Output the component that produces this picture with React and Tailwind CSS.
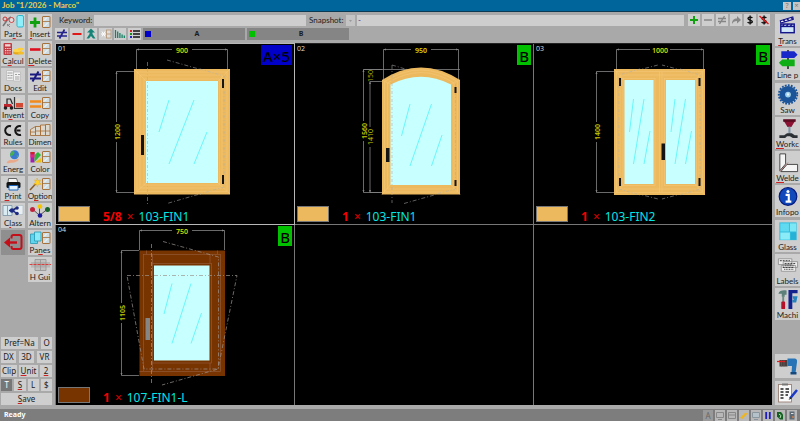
import { useState } from "react";

// the small casement drawn next to the action sign on the edit buttons
const Sash = ({ x = 14 }) => (
    <g transform={`translate(${x} 2)`}>
        <rect x="0.5" y="0.5" width="7.5" height="11" rx="0.5" fill="#cfdde2" stroke="#a5713c" strokeWidth="1" />
        <path d="M0.5 5.5H8" stroke="#a5713c" strokeWidth="0.8" />
        <path d="M2 4.5L5 1.5M2 10.5L6 6.5" stroke="#fff" strokeWidth="0.8" />
    </g>
)

const icons = {
    parts: <>
        <path d="M2 12L7 5L10 3" stroke="#777" strokeWidth="1.6" fill="none" />
        <circle cx="4" cy="5" r="2" fill="none" stroke="#c33" strokeWidth="1" />
        <circle cx="10.5" cy="6" r="2.5" fill="#ddd" stroke="#c44" strokeWidth="1" />
        <path d="M6 10l3 3M9 10l-3 2" stroke="#888" />
        <rect x="16" y="1.5" width="6.5" height="11.5" rx="1.5" fill="#8ff0fb" stroke="#2bb9cf" />
    </>,
    insert: <><path d="M2 8.5H12M7 3.5V13.5" stroke="#10a010" strokeWidth="2.8" /><Sash /></>,
    calcul: <>
        <rect x="2.5" y="2" width="8.5" height="12" rx="1" fill="#c23a42" />
        <rect x="4" y="3.2" width="5.5" height="2.3" fill="#f0d5d5" />
        <path d="M4 7.5H10M4 9.7H10M4 12H10" stroke="#f6dcdc" strokeWidth="1.2" strokeDasharray="1.3 0.9" />
        <ellipse cx="16" cy="11.5" rx="4" ry="2" fill="#e7a91c" />
        <ellipse cx="16" cy="9.5" rx="4" ry="1.8" fill="#ffd54a" />
        <ellipse cx="20" cy="12" rx="3" ry="1.6" fill="#f4bd2c" />
        <ellipse cx="19.5" cy="8" rx="3" ry="1.3" fill="#ffcf3a" />
    </>,
    delete: <><path d="M2 8.5H12.5" stroke="#dd1020" strokeWidth="2.6" /><Sash /></>,
    docs: <>
        <path d="M5.5 2.5h7v10h-7z" fill="#eee" stroke="#bbb" strokeWidth="0.8" />
        <path d="M12.5 4h7v9h-7z" fill="#f2f2f2" stroke="#bbb" strokeWidth="0.8" />
        <path d="M6.5 5h5M6.5 7.5h2M9.5 7.5h2M6.5 10h5M14 6.5h2M17 6.5h2M14 9h4.5M14 11h4.5" stroke="#999" strokeWidth="0.9" />
    </>,
    edit: <><path d="M2 6.5H13M2 10.5H13M10.5 3.5L4.5 13.5" stroke="#1a1a80" strokeWidth="2" /><Sash /></>,
    invent: <>
        <path d="M3 9h7l2 3H3z" fill="#c0242c" />
        <path d="M6 9V4h3.5l2 5" fill="none" stroke="#222" strokeWidth="1.2" />
        <path d="M13.5 2V13.5H22" fill="none" stroke="#333" strokeWidth="1.2" />
        <rect x="15" y="8" width="7" height="4.5" fill="#d34a34" />
        <rect x="15" y="3.5" width="4" height="4" fill="#ded6c8" />
        <circle cx="4.5" cy="13" r="1.8" fill="#222" /><circle cx="10.5" cy="13" r="1.8" fill="#222" />
    </>,
    copy: <><path d="M2 6.5H13M2 11.5H13" stroke="#f08a1c" strokeWidth="2.6" /><Sash /></>,
    rules: <>
        <path d="M10 4.2A4.5 4.5 0 1 0 10 12.8M20 4.2A4.5 4.5 0 1 0 20 12.8M15.5 8.5H19.5" fill="none" stroke="#151515" strokeWidth="2" />
    </>,
    dimen: <>
        <path d="M2.5 13.5V7.5L7.5 4.5V13.5zM7.5 13.5V4.5H12.5V13.5zM12.5 13.5V3H17.5V13.5zM17.5 13.5V2.5H22V13.5z" fill="#ddd8ce" stroke="#a5713c" strokeWidth="0.9" />
        <path d="M2.5 10H7.5M7.5 9H22" stroke="#a5713c" strokeWidth="0.8" />
    </>,
    energ: <>
        <circle cx="13.5" cy="5.8" r="4.5" fill="#3978d2" />
        <path d="M11 2.5c3-1 3 2 1.5 3s-2 3-3 1.5 0-3.5 1.5-4.5M15.5 6c2 0 2 2 0.5 3z" fill="#4cb04a" />
        <path d="M5.5 13.5c2-3 5-2.5 7-2.2l5-1.5c1 0.7-1 2.5-3.5 3.5-3 1-5 0.2-7 1.2z" fill="#e9a98b" />
    </>,
    color: <>
        <path d="M2.5 3h4v10.5h-4z" fill="#a31fb2" /><path d="M2.5 3h4v2.5h-4z" fill="#d32020" />
        <path d="M6.5 6L10 3l3 3-6.5 7z" fill="#2fb53a" /><path d="M6.5 13.5L13 9v4.5z" fill="#e7c11e" />
        <path d="M2.5 5.5h4v3h-4z" fill="#e7267b" /><Sash />
    </>,
    print: <>
        <path d="M7.5 2.5h8l1.5 4H7z" fill="#f3f3f3" stroke="#444" strokeWidth="0.8" />
        <rect x="5.5" y="6" width="14" height="6" rx="1.5" fill="#111" />
        <path d="M8 9.5h9v4.5H8z" fill="#e2f1ff" stroke="#1a65bb" strokeWidth="1" />
    </>,
    option: <>
        <path d="M2 14L8 7.5" stroke="#875b28" strokeWidth="1.5" />
        <path d="M9 2l1 2.5 2.5-.5-1.2 2.3 1.7 2-2.6-.1-1 2.6-1-2.6-2.8 0 2-2-1-2.3 2.3.7z" fill="#ffd22b" stroke="#e0a000" strokeWidth="0.4" /><Sash />
    </>,
    class: <>
        <path d="M2 2.5h9v10H2zM6.5 2.5v10" fill="#d9ecf3" stroke="#829bad" strokeWidth="0.9" />
        <path d="M14 2.5h8v9h-8z" fill="#e9eef1" stroke="#b1bbc3" strokeWidth="0.7" />
        <path d="M8 7.5H12L16 4.5M12 7.5L16 11" stroke="#1d2b83" strokeWidth="1.3" />
        <circle cx="11" cy="7.5" r="2.2" fill="#1d2b83" /><circle cx="16" cy="5" r="1.8" fill="#1d2b83" /><circle cx="16" cy="10.5" r="1.8" fill="#1d2b83" />
    </>,
    altern: <>
        <path d="M4.5 6L11.5 12.5L19.5 6M11.5 4V12" fill="none" stroke="#444" strokeWidth="0.9" />
        <circle cx="4.5" cy="6.5" r="2.5" fill="#c0243c" /><circle cx="12" cy="3.5" r="2.3" fill="#f4c500" />
        <circle cx="19.5" cy="6.5" r="2.5" fill="#17652a" /><circle cx="12" cy="12.5" r="2.3" fill="#1b1b9a" />
    </>,
    panes: <>
        <path d="M2.5 4h7v9.5h-7z" fill="#5fd4ec" stroke="#2498b5" strokeWidth="0.8" />
        <path d="M6.5 2h6.5v9H6.5z" fill="#8ae8f7" stroke="#2498b5" strokeWidth="0.8" /><Sash />
    </>,
    hgui: <>
        <path d="M7 2.5h11v11H7zM12.5 2.5v11" fill="#c2bfbf" stroke="#999" strokeWidth="0.9" />
        <rect x="3" y="5" width="19" height="5.5" fill="#9b9393" opacity="0.4" />
        <path d="M1.5 7.5H23" stroke="#e03030" strokeWidth="0.9" strokeDasharray="3 1" />
    </>,
    exit: <>
        <path d="M10.5 7.5V6a2 2 0 0 1 2-2H18.5a2 2 0 0 1 2 2v10a2 2 0 0 1-2 2H12.500a2 2 0 0 1-2-2v-1" fill="none" stroke="#c40f1a" strokeWidth="2" />
        <path d="M9 6.5V16.5L3 11.5z" fill="#c40f1a" /><path d="M7 11.5H16" stroke="#c40f1a" strokeWidth="2.4" />
    </>,
    trans: <>
        <rect x="4.5" y="10.5" width="14" height="9" fill="#cfe5f8" stroke="#15158a" strokeWidth="1.5" />
        <path d="M4.5 13H18.5" stroke="#15158a" strokeWidth="1.5" />
        <path d="M4 7L17 3L17.5 5.5L4.5 9.5z" fill="#fff" stroke="#15158a" strokeWidth="1.2" />
        <path d="M7 6l2 2.2M11 5l2 2M15 3.5l2 2M8 10.5l-1.5 2.5M12 10.5l-1.5 2.5M16 10.5l-1.5 2.5" stroke="#15158a" strokeWidth="1.5" />
    </>,
    line: <>
        <path d="M12 2V22" stroke="#222" strokeWidth="1.6" />
        <path d="M5 3.5H18.5L22 7L18.5 10.5H5z" fill="#1929c9" />
        <path d="M19 12H6L2.5 15.5L6 19H19z" fill="#0fae16" />
    </>,
    saw: <>
        <circle cx="12" cy="12" r="9" fill="#1b5499" />
        <circle cx="12" cy="12" r="9.6" fill="none" stroke="#1b5499" strokeWidth="2" strokeDasharray="1.9 1.3" />
        <circle cx="12" cy="12" r="3" fill="#9fd0ea" /><circle cx="12" cy="12" r="1.2" fill="#e7f7ff" />
    </>,
    workc: <>
        <path d="M7 2.5H20L18.5 5.5L15.5 10.5H11.5L8.5 5.5z" fill="#8b1232" /><path d="M7 2.5H20V5H7z" fill="#590d22" />
        <path d="M13.5 10V18" stroke="#8296a5" strokeWidth="2.2" />
        <path d="M3 22V19H8L11 17H16L19 19H22V22H17L14 20H11L9 22z" fill="#2b3035" />
    </>,
    welde: <>
        <path d="M3.5 3H9.5V13.5L3.5 20.5z" fill="#f5f5f5" stroke="#333" strokeWidth="0.9" />
        <path d="M4.5 21.5L11 14H22V21.5z" fill="#f5f5f5" stroke="#333" strokeWidth="0.9" />
        <path d="M3.5 21.5L12 12" stroke="#a96b6b" strokeWidth="0.8" />
    </>,
    info: <>
        <circle cx="12" cy="12" r="9.2" fill="#1148ba" stroke="#071a7d" strokeWidth="1.2" />
        <circle cx="12" cy="6.7" r="1.6" fill="#fff" />
        <path d="M9.5 10.3H12.8V17M9.500 17.300H15.500" fill="none" stroke="#fff" strokeWidth="2.2" />
    </>,
    glass: <>
        <rect x="3" y="2.5" width="18" height="18.5" fill="#31bcdc" />
        <path d="M4 3.5h9v8.5H4z" fill="#60daf0" /><path d="M14 3.5h6.5v8.5H14z" fill="#7de8f5" />
        <path d="M4 13h10v7.5H4z" fill="#8bebf7" /><path d="M15 13h5.5v7.5H15z" fill="#28b1d6" />
    </>,
    labels: <>
        <path d="M2 5h14v6H2zM7 8h15v6H7zM5 12h15v6H5z" fill="#eee" stroke="#888" strokeWidth="0.8" />
        <path d="M3.5 7H14M8.5 10H20M6.5 14H18" stroke="#333" strokeWidth="1" strokeDasharray="2 1" />
        <path d="M9 12h9M8 16H18" stroke="#666" strokeWidth="1.4" strokeDasharray="1 0.7" />
    </>,
    machi: <>
        <path d="M2 6C3 2.5 6 2 10.5 2.5V7H8.5V9H5.5V6z" fill="#5b8079" />
        <path d="M7 8V15" stroke="#6d8b85" strokeWidth="2" /><rect x="5" y="14" width="4" height="8" rx="1" fill="#b5122a" />
        <path d="M12.5 2H22V5.5H16.5V22H12.5z" fill="#13228d" />
        <path d="M16.5 8.5H22L20.5 15H16.5V12.5H18z" fill="#2784bd" />
    </>,
    drill: <>
        <path d="M4.500 6h8v6.5h-8z" fill="#47413f" /><path d="M6.5 6v6.5M9 6v6.5" stroke="#6b5550" strokeWidth="0.8" />
        <path d="M2 7.5H10" stroke="#dd2020" strokeWidth="1.3" />
        <path d="M12.5 4.5H20Q22.5 5 22 8L20.5 19H16.5L17 12H12.5z" fill="#2674b5" /><path d="M15.5 18h6v2.5h-6z" fill="#164a7d" />
    </>,
    check: <>
        <rect x="3.5" y="3.5" width="13" height="17.5" fill="#fafafa" stroke="#9a8175" strokeWidth="0.9" />
        <path d="M7 2.5h6v2H7z" fill="#777" />
        <path d="M5.5 8H8.5M5.5 11H8.5M5.5 14H8.5M5.5 17H8.5M10.5 8H14M10.5 11H14M10.5 14H13" stroke="#222" strokeWidth="1.4" />
        <path d="M22 9L15 17.5" stroke="#1838c5" strokeWidth="2.5" /><path d="M15.5 16L13.5 19L16.5 17.5z" fill="#222" />
    </>,
}

// caption with its shortcut letter underlined
const Caption = ({ text, hot = -1 }) => (
    <span className="block whitespace-nowrap font-[Lato,sans-serif] text-[8px] leading-[8px]">
        {hot < 0 ? text : <>{text.slice(0, hot)}<span className="underline decoration-[#d02020]">{text[hot]}</span>{text.slice(hot + 1)}</>}
    </span>
)

const leftTools = [
    ["parts", "Parts", 2], ["insert", "Insert", 0],
    ["calcul", "Calcul", 1], ["delete", "Delete", 0],
    ["docs", "Docs"], ["edit", "Edit"],
    ["invent", "Invent", 2], ["copy", "Copy"],
    ["rules", "Rules"], ["dimen", "Dimen"],
    ["energ", "Energ"], ["color", "Color"],
    ["print", "Print", 0], ["option", "Option", 1],
    ["class", "Class", 1], ["altern", "Altern"],
    ["exit", ""], ["panes", "Panes", 2],
    null, ["hgui", "H Gui"],
]

const rightTools = [
    ["trans", "Trans", 0], ["line", "Line p"], ["saw", "Saw"], ["workc", "Workc", 0], ["welde", "Welde", 0],
    ["info", "Infopo"], ["glass", "Glass"], ["labels", "Labels"], ["machi", "Machi"],
]

const LeftTool = ({ icon, text, hot }) => {
    if (!text) {
        return (
            <button aria-label="Exit" className="h-[25px] bg-[#8f8f8f]">
                <svg viewBox="0 0 24 24" className="h-6 w-6">{icons[icon]}</svg>
            </button>
        )
    }
    return (
        <button className="flex h-[25px] flex-col items-center overflow-hidden bg-[#cecece]">
            <svg viewBox="0 0 24 16" className="h-4 w-6 shrink-0">{icons[icon]}</svg>
            <Caption text={text} hot={hot} />
        </button>
    )
}

const Key = ({ text, hot, className = "flex-1" }) => (
    <button className={`h-3 bg-[#cecece] text-[8px] leading-[12px] ${className}`}>
        {hot ? <span className="underline decoration-[#d02020]">{text[0]}</span> : text[0]}{text.slice(1)}
    </button>
)

const LeftBar = () => (
    <aside className="flex w-[51px] shrink-0 flex-col justify-between">
        <div className="grid grid-cols-2 gap-x-[3px] gap-y-[2px]">
            {leftTools.map((tool, i) => tool
                ? <LeftTool key={tool[0]} icon={tool[0]} text={tool[1]} hot={tool[2]} />
                : <span key={i} />
            )}
        </div>
        <div className="flex flex-col gap-[2px]">
            <div className="flex gap-[3px]"><Key text="Pref=Na" /><Key text="O" className="w-[11px]" /></div>
            <div className="flex gap-[3px]"><Key text="DX" /><Key text="3D" /><Key text="VR" /></div>
            <div className="flex gap-[2px]"><Key text="Clip" className="w-4" /><Key text="Unit" hot className="w-[19px]" /><Key text="2" hot className="w-3" /></div>
            <div className="flex gap-[2px]">
                <Key text="T" className="flex-1 bg-[#777777]! text-white" /><Key text="S" hot /><Key text="L" /><Key text="$" />
            </div>
            <Key text="Save" hot className="w-full" />
        </div>
    </aside>
)

const RightBar = () => (
    <aside className="flex w-[25px] shrink-0 flex-col overflow-hidden">
        <div className="flex flex-1 flex-col justify-between">
            {rightTools.map(([icon, text, hot]) =>
                <button key={icon} className="flex h-8 flex-col items-center overflow-hidden bg-[#cecece]">
                    <svg viewBox="0 0 24 24" className="h-[23px] w-6 shrink-0">{icons[icon]}</svg>
                    <Caption text={text} hot={hot} />
                </button>
            )}
        </div>
        <div className="mt-[34px] flex flex-col gap-[3px]">
            <button aria-label="Drilling" className="h-6 bg-[#cecece]"><svg viewBox="0 0 24 24" className="h-6 w-6">{icons.drill}</svg></button>
            <button aria-label="Checklist" className="h-6 bg-[#cecece]"><svg viewBox="0 0 24 24" className="h-6 w-6">{icons.check}</svg></button>
        </div>
    </aside>
)

const MiniButton = ({ label, children, className = "w-3" }) => (
    <button aria-label={label} className={`h-3 shrink-0 bg-[#cecece] ${className}`}>
        <svg viewBox="0 0 12 12" className="mx-auto h-3 w-3">{children}</svg>
    </button>
)

const Dollar = () => (
    <path d="M8.3 4C7.8 2.9 4 2.6 4 4.5S8.3 5.7 8.3 7.6 4.2 9.3 3.7 8M6.1 1.5V10.5" fill="none" stroke="#111" strokeWidth="1.4" />
)

const SearchRow = () => {
    const [keyword, setKeyword] = useState("")
    const [snapshot, setSnapshot] = useState("-")
    return (
        <div className="flex h-3 items-center font-[Lato,sans-serif] text-[8px]">
            <label htmlFor="keyword" className="w-[39px] pl-1">Keyword:</label>
            <input id="keyword" value={keyword} onChange={(e) => setKeyword(e.target.value)} className="h-[11px] w-[212px] bg-[#cecece] px-1 outline-none" />
            <label htmlFor="snapshot" className="w-10 pl-[3px]">Snapshot:</label>
            <button aria-label="Pick snapshot" className="mr-[2px] h-[11px] w-[9px] bg-[#c4c4c4]">
                <svg viewBox="0 0 9 11" className="h-[11px] w-[9px]"><path d="M3 5h3l-1.5 2z" fill="#999" /></svg>
            </button>
            <input id="snapshot" value={snapshot} onChange={(e) => setSnapshot(e.target.value)} className="h-[11px] min-w-0 flex-1 bg-[#cecece] px-[1px] text-[#2a3f8f] outline-none" />
            <div className="ml-1 mr-[2px] flex gap-[2px]">
                <MiniButton label="Add"><path d="M2 6H10M6 2V10" stroke="#10a010" strokeWidth="2" /></MiniButton>
                <MiniButton label="Remove"><path d="M2 6H10" stroke="#8b8b8b" strokeWidth="1.6" /></MiniButton>
                <MiniButton label="Modify"><path d="M2 4.5H10M2 7.5H10M8.5 2L3.5 10" stroke="#858585" strokeWidth="1.4" /></MiniButton>
                <MiniButton label="Forward"><path d="M2 10C2 6 4 4.5 7 4.5V2L11 6L7 9.5V7C4.5 7 3 8 2 10z" fill="#888" /></MiniButton>
                <MiniButton label="Prices"><Dollar /></MiniButton>
                <MiniButton label="No prices"><Dollar /><path d="M1.5 2L10.5 10" stroke="#e01818" strokeWidth="1.4" /></MiniButton>
            </div>
        </div>
    )
}

const TabRow = () => (
    <div className="mt-[2px] flex h-3 gap-[2px] text-[7px] font-bold">
        <MiniButton label="Change" className="w-[13px]"><path d="M1 4.5H11M1 8H11M8.5 1.5L3.5 10.5" stroke="#24248c" strokeWidth="1.7" /></MiniButton>
        <MiniButton label="Take away" className="w-[13px]"><path d="M1.5 6H10.5" stroke="#e01818" strokeWidth="2" /></MiniButton>
        <MiniButton label="Merge">
            <path d="M6 0.5L10 4.5H7.5V6L10.5 10.5H8L6 8L4 10.5H1.5L4.5 6V4.5H2z" fill="#168377" />
        </MiniButton>
        <MiniButton label="Freeze" className="w-[13px]">
            <path d="M1 6H6M2 3.5L5 8.5M5 3.5L2 8.5" stroke="#fff" strokeWidth="1" /><rect x="6.5" y="2" width="4.5" height="8" fill="#ddd" stroke="#b59674" strokeWidth="0.8" /><path d="M6.5 6H11" stroke="#b59674" strokeWidth="0.8" />
        </MiniButton>
        <MiniButton label="Sort"><path d="M1.5 2V10M3.7 3.5V10M5.9 5V10M8.1 6.5V10M10.3 7.5V10" stroke="#178065" strokeWidth="1.3" /></MiniButton>
        <MiniButton label="List" className="w-[13px]">
            <path d="M4 3H11M4 6H11M4 9H11" stroke="#111" strokeWidth="1.5" />
            <path d="M1 3H3" stroke="#d02020" strokeWidth="1.8" /><path d="M1 6H3" stroke="#159015" strokeWidth="1.8" /><path d="M1 9H3" stroke="#2020c0" strokeWidth="1.8" />
        </MiniButton>
        <button className="flex w-[102px] items-center bg-[#858585] px-[2px]">
            <span className="h-[6px] w-[6px] bg-[#0000c8]" /><span className="flex-1">A</span>
        </button>
        <button className="flex w-[102px] items-center bg-[#858585] px-[2px]">
            <span className="h-[6px] w-[6px] bg-[#00c000]" /><span className="flex-1">B</span>
        </button>
    </div>
)

// horizontal dimension: line at y from x1 to x2, witness lines down to "to"
const DimH = ({ x1, x2, y, to, text }) => {
    const mid = (x1 + x2) / 2
    return (
        <g stroke="#858585" strokeWidth="0.8" fill="none">
            <path d={`M${x1} ${y}H${mid - 10}M${mid + 10} ${y}H${x2}M${x1} ${y}V${to}M${x2} ${y}V${to}`} />
            <path d={`M${x1} ${y}l2.5 -1v2zM${x2} ${y}l-2.5 -1v2z`} fill="#858585" stroke="none" />
            <text x={mid} y={y + 3} textAnchor="middle" fontSize="7" fontWeight="600" fill="#dada00" stroke="none">{text}</text>
        </g>
    )
}

const DimV = ({ y1, y2, x, to, text, mid = (y1 + y2) / 2, weight = 600, gap = 10 }) => (
    <g stroke="#858585" strokeWidth="0.8" fill="none">
        <path d={`M${x} ${y1}V${Math.max(mid - gap, y1)}M${x} ${Math.min(mid + gap, y2)}V${y2}M${x} ${y1}H${to}M${x} ${y2}H${to}`} />
        <path d={`M${x} ${y1}l-1 2.5h2zM${x} ${y2}l-1 -2.5h2z`} fill="#858585" stroke="none" />
        <text transform={`translate(${x + 3} ${mid}) rotate(-90)`} textAnchor="middle" fontSize="7" fontWeight={weight} fill="#c8c800" stroke="none">{text}</text>
    </g>
)

const Swing = ({ d, color = "#858585" }) => <path d={d} fill="none" stroke={color} strokeWidth="0.7" strokeDasharray="4 2 1 2" />
const FaintSwing = ({ d }) => <path d={d} fill="none" stroke="#b0b0a8" strokeWidth="0.6" strokeDasharray="3 2 1 2" />
const Shine = ({ d }) => <path d={d} stroke="#5cf6fa" strokeWidth="0.9" fill="none" />
const Fittings = ({ d }) => <path d={d} fill="#151515" />

const Window1 = () => (
    <>
        <DimH x1={136.5} x2={227.5} y={49.5} to={69} text="900" />
        <DimV y1={71.5} y2={192.5} x={116.5} to={134} text="1200" />
        <Swing d="M147.5 62V204M167 60L224 76M224 187L167 203.5" />
        <rect x="134" y="69" width="96" height="125.5" fill="#edb95f" />
        <g fill="none" stroke="#f4c778" strokeWidth="0.6">
            <rect x="137" y="72" width="90" height="119.5" /><rect x="140" y="75" width="82" height="113" /><rect x="144" y="79" width="75.5" height="106" />
            <path d="M134 69L146 81M230 69L218 81M134 194L146 183M230 194L218 183" />
        </g>
        <rect x="146" y="81" width="72" height="102" fill="#c8ffff" />
        <FaintSwing d="M147.5 69V194M200 69L224 76V187L200 194" />
        <Shine d="M169 100L159 132M194 100L169 164M207 132L194 164" />
        <Fittings d="M141 135h3v20h-3zM222 79h2v9h-2zM222 175h2v9h-2z" />
    </>
)

const Window2 = () => (
    <>
        <DimH x1={383.5} x2={458.5} y={49.5} to={80} text="950" />
        <DimV y1={69.5} y2={192.5} x={363.5} to={382} text="1560" />
        <path d="M363.5 69.5H460" stroke="#858585" strokeWidth="0.8" />
        <DimV y1={81.5} y2={192.5} x={370} to={382} text="1410" weight={400} />
        <text transform="translate(373 76) rotate(-90)" textAnchor="middle" fontSize="7" fill="#a8a800">150</text>
        <Swing d="M392 65V203M392 65L412 71M404 203.5L436 194.5" />
        <path d="M382 194.5V80Q421 55 460 80V194.5z" fill="#edb95f" />
        <g fill="none" stroke="#f4c778" strokeWidth="0.6">
            <path d="M384.5 192V81.5Q421 58.5 457.5 81.5V192z" /><path d="M387.5 189V83Q421 62 454 83V189z" />
            <path d="M382 194.5L390 185M460 194.5L451 185M382 80L390 84M460 80L451 84" />
        </g>
        <path d="M390.5 185V84.5Q421 69 451 84.5V185z" fill="#c8ffff" />
        <FaintSwing d="M392 75V194M455.5 84V189L436 194" />
        <Shine d="M410 104L401.5 136M431.5 104L410 166M442 135L431.5 166" />
        <Fittings d="M386 148h3.5v14h-3.5zM454.5 87h2v6h-2zM454.5 180h2v6h-2z" />
    </>
)

const Window3 = () => (
    <>
        <DimH x1={616.5} x2={703.5} y={49.5} to={69} text="1000" />
        <DimV y1={71.5} y2={192.5} x={596.5} to={614} text="1400" />
        <Swing d="M619 75L658 65M700 75L662 65M619 189L658 199M700 189L662 199" />
        <rect x="614" y="69" width="91" height="126" fill="#edb95f" />
        <g fill="none" stroke="#f4c778" strokeWidth="0.6">
            <rect x="616.5" y="71.5" width="86" height="121" /><rect x="620" y="75" width="79" height="114" />
            <rect x="623" y="78.5" width="32" height="107" /><rect x="664.5" y="78.5" width="32" height="107" />
            <path d="M614 69L624 80M705 69L695 80M614 195L624 184M705 195L695 184M659.5 72V192M662 72V192" />
        </g>
        <rect x="624.5" y="80" width="29" height="104" fill="#c8ffff" />
        <rect x="666" y="80" width="29" height="104" fill="#c8ffff" />
        <FaintSwing d="M640 69L619 75V189L640 195M680 69L700 75V189L680 195" />
        <Shine d="M633.5 99L629.5 132M644 99L633.5 164M650 131L644 164M675 99L671 132M685.5 99L675 164M691.5 131L685.5 164" />
        <Fittings d="M661.5 143.5h3.5v16.5h-3.5zM619 78h2v8h-2zM619 178h2v8h-2zM698.5 78h2v8h-2zM698.5 178h2v8h-2z" />
    </>
)

const Window4 = () => (
    <>
        <DimH x1={139.5} x2={224.5} y={230.5} to={250} text="750" />
        <DimV y1={250.5} y2={375.5} x={121.5} to={139} text="1105" />
        <rect x="139.5" y="250.5" width="85.5" height="125.5" fill="#773300" />
        <g fill="none" stroke="#935a37" strokeWidth="0.7">
            <rect x="143.5" y="254.5" width="77" height="117" /><rect x="152.5" y="263.5" width="59" height="99.5" />
            <path d="M152.5 254.5V263M210 254.5V263M152.5 363V371M210 363V371M146.5 250.5V254M217.5 250.5V254M139.5 371.5H143" />
        </g>
        <rect x="154" y="265.5" width="55.5" height="95" fill="#c8ffff" />
        <Swing d="M151.5 244V385M163 241.5L218.5 257V369L162 385M127 275.5H237L218 369H144z" color="#9d958f" />
        <Shine d="M172 283.5L164 314M191 283.5L172 343.5M201.5 313L191 343.5" />
        <rect x="145.5" y="318" width="4.5" height="22" fill="#858585" />
    </>
)

const positions = [
    { no: "01", qty: "5/8", name: "103-FIN1", group: "A×5", badge: "bg-[#0000c8]", swatch: "bg-[#edb95f]", origin: "56 44", drawing: <Window1 />, selected: true },
    { no: "02", qty: "1", name: "103-FIN1", group: "B", badge: "bg-[#00c000]", swatch: "bg-[#edb95f]", origin: "295 44", drawing: <Window2 /> },
    { no: "03", qty: "1", name: "103-FIN2", group: "B", badge: "bg-[#00c000]", swatch: "bg-[#edb95f]", origin: "534 44", drawing: <Window3 /> },
    { no: "04", qty: "1", name: "107-FIN1-L", group: "B", badge: "bg-[#00c000]", swatch: "bg-[#773300]", origin: "56 225", drawing: <Window4 /> },
    null,
    null,
]

const Position = ({ pos }) => (
    <div className={`relative flex flex-col justify-between bg-black ${pos.selected ? "z-10 outline-1 outline-[#b8b8b8]" : ""}`}>
        <svg viewBox={`${pos.origin} 238 180`} className="absolute inset-0 h-full w-full">{pos.drawing}</svg>
        <div className="relative flex items-start justify-between">
            <span className="pl-[2px] text-[7px] leading-[10px] text-[#d8d8d8]">{pos.no}</span>
            <span className={`mr-[2px] mt-px px-[2px] pt-[2px] text-[15px] leading-[18px] font-medium text-black ${pos.badge}`}>{pos.group}</span>
        </div>
        <div className="relative flex items-end pb-[2px] pl-[2px]">
            <span className={`h-4 w-8 border border-[#777] ${pos.swatch}`} />
            <p className="ml-[13px] flex gap-[5px] text-[12px] leading-[11px]">
                <b className="text-[#f40000]">{pos.qty}</b>
                <span className="font-medium text-[#cc0000]">×</span>
                <span className="text-[#00e6e6]">{pos.name}</span>
            </p>
        </div>
    </div>
)

const StatusIcon = ({ label, children }) => (
    <button aria-label={label} className="h-[11px] w-[10px] bg-[#b8b8b8]">
        <svg viewBox="0 0 10 11" className="h-[11px] w-[10px]">{children}</svg>
    </button>
)

const StatusBar = () => (
    <footer className="flex h-3 shrink-0 items-center justify-between bg-[#7d7d7d] pl-1 pr-[3px] text-[7px] font-bold text-white">
        <span>Ready</span>
        <div className="flex gap-[2px]">
            <button aria-label="Text" className="h-[11px] w-[10px] bg-[#999] text-[8px] leading-[11px] font-normal text-[#666]">A</button>
            <StatusIcon label="Screen"><path d="M1.5 2.5h7v5h-7zM3 9.5h4" fill="none" stroke="#888" /></StatusIcon>
            <StatusIcon label="Layout"><path d="M1.5 2.5h7v6h-7zM1.5 5H8.5" fill="none" stroke="#888" /></StatusIcon>
            <StatusIcon label="Write"><path d="M2 8.5L7.5 3" stroke="#f0b51c" strokeWidth="2.4" /></StatusIcon>
            <StatusIcon label="Monitor"><path d="M1.5 2.5h7v5h-7zM3 9.5h4" fill="#b5c2c9" stroke="#8a969d" /></StatusIcon>
            <StatusIcon label="Pause"><path d="M3.2 2V9M6.8 2V9" stroke="#1c1cc0" strokeWidth="1.8" /></StatusIcon>
            <StatusIcon label="Refresh"><path d="M2 2h4l2 2.5v5H5L2 6.5z" fill="#146023" /><path d="M4 4l2 1.5L5 8" fill="none" stroke="#b9e4b9" /></StatusIcon>
            <StatusIcon label="Server"><path d="M2.5 1.5h5v8h-5z" fill="#5c6a75" /><path d="M4 3.5h2.5" stroke="#ddd" /><circle cx="6" cy="7" r="1.2" fill="#b47b53" /></StatusIcon>
        </div>
    </footer>
)

const App = () => {
    return (
        <div className="flex min-h-screen flex-col bg-[#a9a9a9] font-['Noto_Sans',sans-serif] text-[#1c1c1c]">
            <header className="flex h-3 shrink-0 items-center justify-between border-b border-[#0a3a55] bg-[#00659a] pl-[2px]">
                <h1 className="font-[Lato,sans-serif] text-[8px] leading-[11px] font-bold text-[#f0cf4a]">Job "1/2026 - Marco"</h1>
                <div className="flex gap-[2px] text-[7px] leading-[8px] text-[#777]">
                    <button className="h-2 w-2 bg-[#c4c4c4]">?</button>
                    <button className="h-2 w-[7px] bg-[#c4c4c4]">×</button>
                </div>
            </header>
            <div className="flex flex-1 gap-[3px] pt-[2px] pb-1 pl-px">
                <LeftBar />
                <main className="flex min-w-0 flex-1 flex-col">
                    <SearchRow />
                    <TabRow />
                    <div className="mt-[3px] grid flex-1 grid-cols-3 grid-rows-2 gap-px border-t border-l border-t-[#222] border-l-[#777] bg-[#777]">
                        {positions.map((pos, i) => pos
                            ? <Position key={pos.no} pos={pos} />
                            : <div key={i} className="bg-black" />
                        )}
                    </div>
                </main>
                <RightBar />
            </div>
            <StatusBar />
        </div>
    )
}
export default App
